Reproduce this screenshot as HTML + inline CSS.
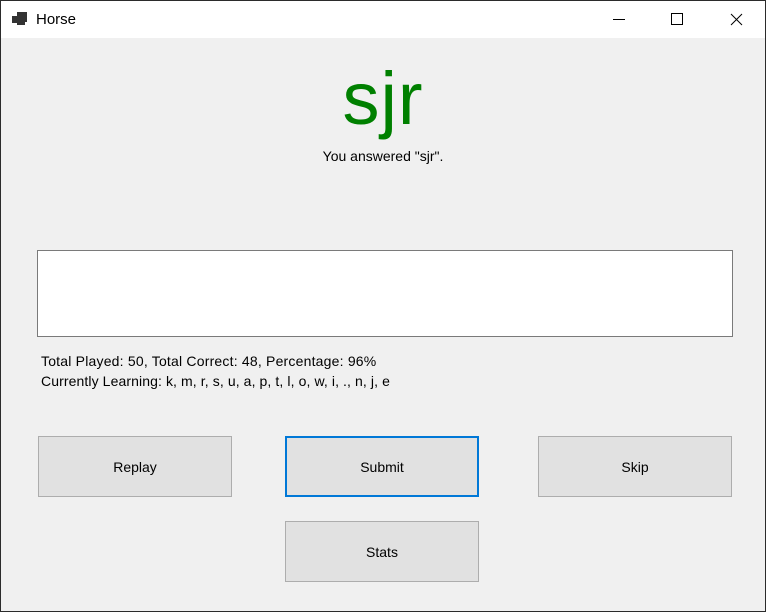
<!DOCTYPE html>
<html><head><meta charset="utf-8"><style>
*{margin:0;padding:0;box-sizing:border-box}
body{width:766px;height:612px;background:#f0f0f0;font-family:"Liberation Sans",sans-serif;position:relative;overflow:hidden;border:1px solid #2b2b2b}
.title{position:absolute;left:0;top:0;width:764px;height:37px;background:#fff}
.t{position:absolute;font-size:14px;color:#000}
.btn{position:absolute;width:194px;height:61px;background:#e1e1e1;border:1px solid #adadad;font-size:14px;color:#000;display:flex;align-items:center;justify-content:center}
</style></head><body>
<div class="title">
<svg style="position:absolute;left:11px;top:11px" width="16" height="14"><rect x="0" y="4" width="6" height="7" fill="#333"/><rect x="5" y="0" width="10" height="10" fill="#333"/><rect x="5" y="8" width="8" height="5" fill="#333"/></svg>
<div class="t" style="left:35px;top:10px;font-size:15px">Horse</div>
<svg style="position:absolute;left:600px;top:0" width="164" height="37"><line x1="12" y1="18.5" x2="24" y2="18.5" stroke="#000"/><rect x="70.5" y="12.5" width="11" height="11" fill="none" stroke="#000"/><path d="M130 13 L141 24 M141 13 L130 24" stroke="#000"/></svg>
</div>
<div class="t" style="left:0;width:764px;text-align:center;top:56px;font-size:74px;color:#008000;line-height:84px;letter-spacing:1px">sjr</div>
<div class="t" style="left:0;width:764px;text-align:center;top:147px">You answered "sjr".</div>
<div style="position:absolute;left:36px;top:249px;width:696px;height:87px;background:#fff;border:1px solid #7a7a7a"></div>
<div class="t" style="left:40px;top:352px;letter-spacing:0.2px">Total Played: 50, Total Correct: 48, Percentage: 96%</div>
<div class="t" style="left:40px;top:372px;letter-spacing:0.1px">Currently Learning: k, m, r, s, u, a, p, t, l, o, w, i, ., n, j, e</div>
<div class="btn" style="left:37px;top:435px">Replay</div>
<div class="btn" style="left:284px;top:435px;border:2px solid #0078d7">Submit</div>
<div class="btn" style="left:537px;top:435px">Skip</div>
<div class="btn" style="left:284px;top:520px">Stats</div>
</body></html>
